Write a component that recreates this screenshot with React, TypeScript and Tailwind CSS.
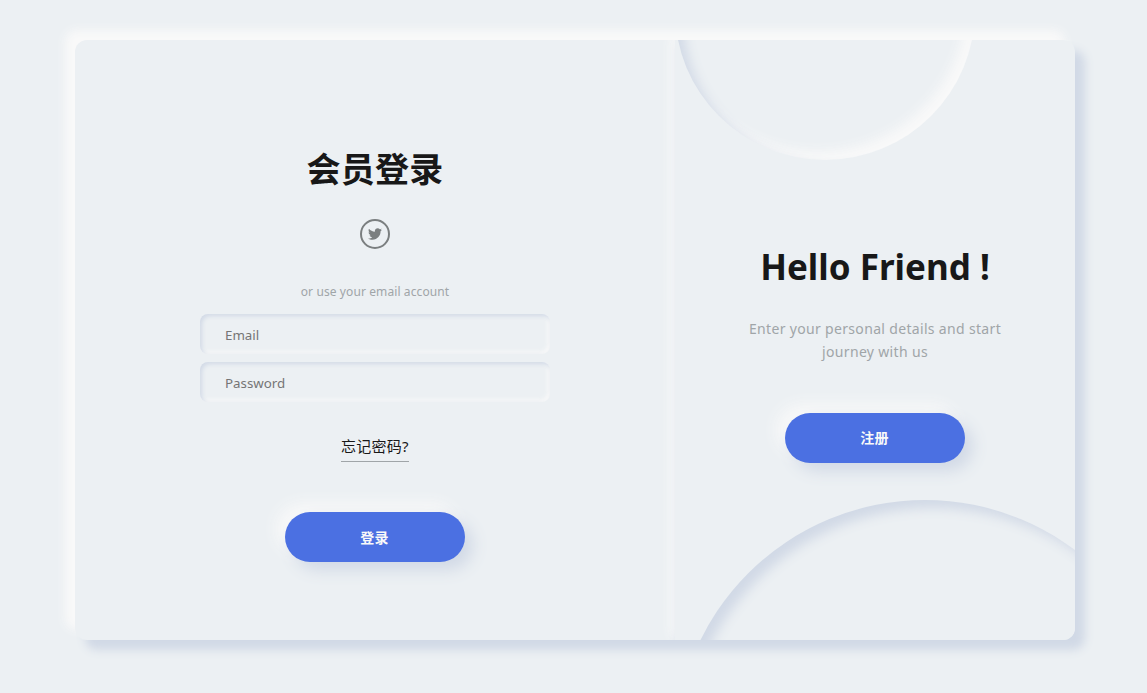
import React from 'react';
import { FaTwitter } from 'react-icons/fa';

const font = { fontFamily: '"Noto Sans", "Noto Sans CJK SC", sans-serif' };

const App: React.FC = () => {
  return (
    <div className="h-[693px] w-[1147px] overflow-hidden bg-[#ecf0f3] pl-[75px] pt-[40px]" style={font}>
      <div className="flex h-[600px] w-[1000px] overflow-hidden rounded-xl bg-[#ecf0f3] shadow-[10px_10px_10px_#d1d9e6,-10px_-10px_10px_#f9f9f9]">
        {/* Login form */}
        <div className="flex w-[600px] flex-col items-center pt-[105px]">
          <h1 className="text-[34px] leading-[48px] font-bold tracking-[0.3px] text-[#181818]">会员登录</h1>
          <a className="mt-[26px] flex h-[30px] w-[30px] items-center justify-center rounded-full border-2 border-[#7b7f80] text-[#7b7f80]">
            <FaTwitter className="h-[14px] w-[14px]" />
          </a>
          <span className="mt-[33px] text-[12px] leading-[20px] tracking-[0.1px] text-[#a0a5a8]">or use your email account</span>
          <input
            placeholder="Email"
            className="mt-[12px] h-[40px] w-[350px] rounded-lg bg-[#ecf0f3] pt-[2px] pl-[25px] text-[13.33px] shadow-[inset_2px_2px_4px_#d1d9e6,inset_-2px_-2px_4px_#f9f9f9] outline-none placeholder:text-[#757575]"
          />
          <input
            placeholder="Password"
            className="mt-[8px] h-[40px] w-[350px] rounded-lg bg-[#ecf0f3] pt-[2px] pl-[25px] text-[13.33px] shadow-[inset_2px_2px_4px_#d1d9e6,inset_-2px_-2px_4px_#f9f9f9] outline-none placeholder:text-[#757575]"
          />
          <a className="mt-[32px] border-b border-[#a0a5a8] pb-[3px] text-[15px] leading-[24px] tracking-[0.25px] text-[#181818]">忘记密码?</a>
          <button className="mt-[50px] h-[50px] w-[180px] rounded-[25px] bg-[#4b70e2] pt-[1px] pr-[1px] text-[14px] font-bold tracking-[0.25px] text-[#f9f9f9] shadow-[8px_8px_16px_#d1d9e6,-8px_-8px_16px_#f9f9f9]">
            登录
          </button>
        </div>

        {/* Sign up panel */}
        <div className="relative flex w-[400px] flex-col items-center overflow-hidden pt-[203px] shadow-[4px_4px_10px_#d1d9e6,-4px_-4px_10px_#f9f9f9]">
          <div className="absolute top-[-180px] left-0 h-[300px] w-[300px] rounded-full bg-[#ecf0f3] shadow-[inset_8px_8px_12px_#d1d9e6,inset_-8px_-8px_12px_#f9f9f9]" />
          <div className="absolute top-[460px] left-0 h-[500px] w-[500px] rounded-full bg-[#ecf0f3] shadow-[inset_8px_8px_12px_#d1d9e6,inset_-8px_-8px_12px_#f9f9f9]" />
          <h2 className="relative text-[35px] leading-[48px] font-bold text-[#181818]">Hello Friend !</h2>
          <p className="relative mt-[26px] w-[300px] text-center text-[14px] leading-[23px] tracking-[0.33px] text-[#a0a5a8]">
            Enter your personal details and start journey with us
          </p>
          <button className="relative mt-[50px] h-[50px] w-[180px] rounded-[25px] bg-[#4b70e2] pr-[1px] pb-[1px] text-[14px] font-bold tracking-[0.25px] text-[#f9f9f9] shadow-[8px_8px_16px_#d1d9e6,-8px_-8px_16px_#f9f9f9]">
            注册
          </button>
        </div>
      </div>
    </div>
  );
};

export default App;
